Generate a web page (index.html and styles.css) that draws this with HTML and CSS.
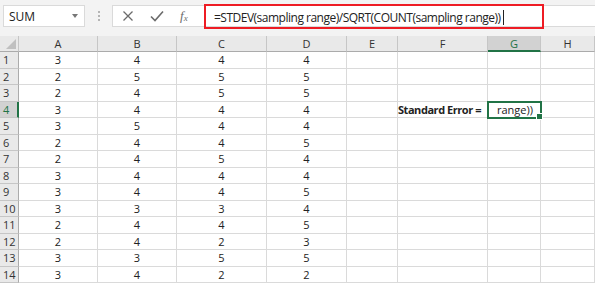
FILE: index.html
```html
<!DOCTYPE html>
<html>
<head>
<meta charset="utf-8">
<link rel="stylesheet" href="styles.css">
</head>
<body>
<div class="app">
  <div class="toolbar">
    <div class="namebox"><span>SUM</span><span class="caret"></span></div>
    <div class="grip"><i></i><i></i><i></i></div>
    <div class="fbar">
      <div class="ficons">
        <svg width="12" height="12" viewBox="0 0 12 12"><path d="M1.5 1.5 L10.5 10.5 M10.5 1.5 L1.5 10.5" stroke="#6b6b6b" stroke-width="1.3" fill="none"/></svg>
        <svg width="14" height="12" viewBox="0 0 14 12"><path d="M1 6.5 L5 10.5 L13 1.5" stroke="#6b6b6b" stroke-width="1.6" fill="none"/></svg>
        <span class="fx">f<sub>x</sub></span>
      </div>
      <div class="formula">=STDEV(sampling range)/SQRT(COUNT(sampling range))<span class="cursor"></span></div>
    </div>
  </div>
  <div class="sheet">
    <div class="hd corner"><span class="tri"></span></div>
    <div class="hd">A</div><div class="hd">B</div><div class="hd">C</div><div class="hd">D</div><div class="hd">E</div><div class="hd">F</div><div class="hd sel">G</div><div class="hd">H</div>
  </div>
  <div class="sheet body" id="body"></div>
</div>
<script src="app.js"></script>
</body>
</html>
```
FILE: app.js
```js
const data = [
  [3,4,4,4],[2,5,5,5],[2,4,5,5],[3,4,4,4],[3,5,4,4],[2,4,4,5],[2,4,5,4],
  [3,4,4,4],[3,4,4,5],[3,3,3,4],[2,4,4,5],[2,4,2,3],[3,3,5,5],[3,4,2,2]
];
const body = document.getElementById('body');
let html = '';
data.forEach((r, i) => {
  const n = i + 1;
  html += `<div class="rh${n === 4 ? ' sel' : ''}">${n}</div>`;
  r.forEach(v => { html += `<div class="c">${v}</div>`; });
  html += `<div class="c"></div>`;
  if (n === 4) {
    html += `<div class="c label">Standard Error =</div><div class="c active">range))</div>`;
  } else {
    html += `<div class="c"></div><div class="c"></div>`;
  }
  html += `<div class="c"></div>`;
});
body.innerHTML = html;
```
FILE: styles.css
```css
* { box-sizing: border-box; }
html, body { margin: 0; padding: 0; background: #fff; }
body { width: 595px; height: 285px; overflow: hidden; font-family: "Open Sans", "Liberation Sans", sans-serif; }
.app { width: 595px; }
.toolbar {
  height: 36px; background: #f3f3f3; display: flex; align-items: flex-start;
  padding: 5px 0 0 3px;
}
.namebox {
  width: 82px; height: 22px; background: #fff; border: 1px solid #dadada;
  display: flex; align-items: center; justify-content: space-between;
  padding: 0 5px 0 5px; font-size: 12px; color: #222;
}
.caret { width: 0; height: 0; border-left: 3.5px solid transparent; border-right: 3.5px solid transparent; border-top: 4px solid #777; margin-right: 1px; }
.grip { width: 27px; height: 22px; display: flex; flex-direction: column; align-items: center; justify-content: center; gap: 2px; }
.grip i { display: block; width: 2px; height: 2px; background: #b5b5b5; }
.fbar { flex: 1; height: 22px; background: #fff; border: 1px solid #dadada; border-right: none; display: flex; position: relative; }
.ficons { width: 91px; display: flex; align-items: center; gap: 0; padding-left: 8px; }
.ficons svg:nth-child(1) { margin-left: 1px; }
.ficons svg:nth-child(2) { margin-left: 16px; }
.fx { margin-left: 16px; font-family: "Liberation Serif", serif; font-style: italic; color: #6b6b6b; font-size: 13px; }
.fx sub { font-size: 9px; vertical-align: -1px; }
.formula {
  margin-top: -2px; height: 25px; width: 340px; border: 2px solid #ee1c24;
  font-family: "Open Sans", sans-serif; font-size: 12px; color: #222; letter-spacing: -0.5px;
  padding: 2px 0 0 8px; white-space: nowrap; display: flex; align-items: center;
}
.cursor { display: inline-block; width: 1px; height: 15px; background: #222; margin-left: 2px; }
.sheet {
  display: grid;
  grid-template-columns: 19px 79px 79px 90px 80px 51px 90px 53px 54px;
}
.hd {
  height: 16px; background: #e9e9e9; border-right: 1px solid #c6c6c6; border-bottom: 1px solid #ababab;
  font-size: 11px; color: #333; display: flex; align-items: center; justify-content: center;
}
.hd.sel { background: #d2d2d2; border-bottom: 2px solid #217346; color: #217346; }
.corner { position: relative; }
.tri { position: absolute; right: 2px; bottom: 2px; width: 0; height: 0; border-left: 10px solid transparent; border-bottom: 10px solid #c0c0c0; }
.body { grid-auto-rows: 16.5px; }
.rh {
  background: #e9e9e9; border-right: 1px solid #ababab; border-bottom: 1px solid #c6c6c6;
  font-size: 11px; color: #333; display: flex; align-items: center; padding-left: 3px;
}
.rh.sel { background: #d2d2d2; border-right: 2px solid #217346; color: #217346; }
.c {
  border-right: 1px solid #dadada; border-bottom: 1px solid #dadada;
  font-size: 11px; color: #222; display: flex; align-items: center; justify-content: center;
  white-space: nowrap;
}
.c.label { justify-content: flex-end; font-weight: bold; padding-right: 6px; letter-spacing: -0.45px; }
.c.active { outline: 2px solid #217346; outline-offset: -1px; justify-content: flex-start; padding-left: 9px; position: relative; }
.c.active::after { content: ""; position: absolute; right: -3px; bottom: -3px; width: 5px; height: 5px; background: #217346; border: 1px solid #fff; }
```
